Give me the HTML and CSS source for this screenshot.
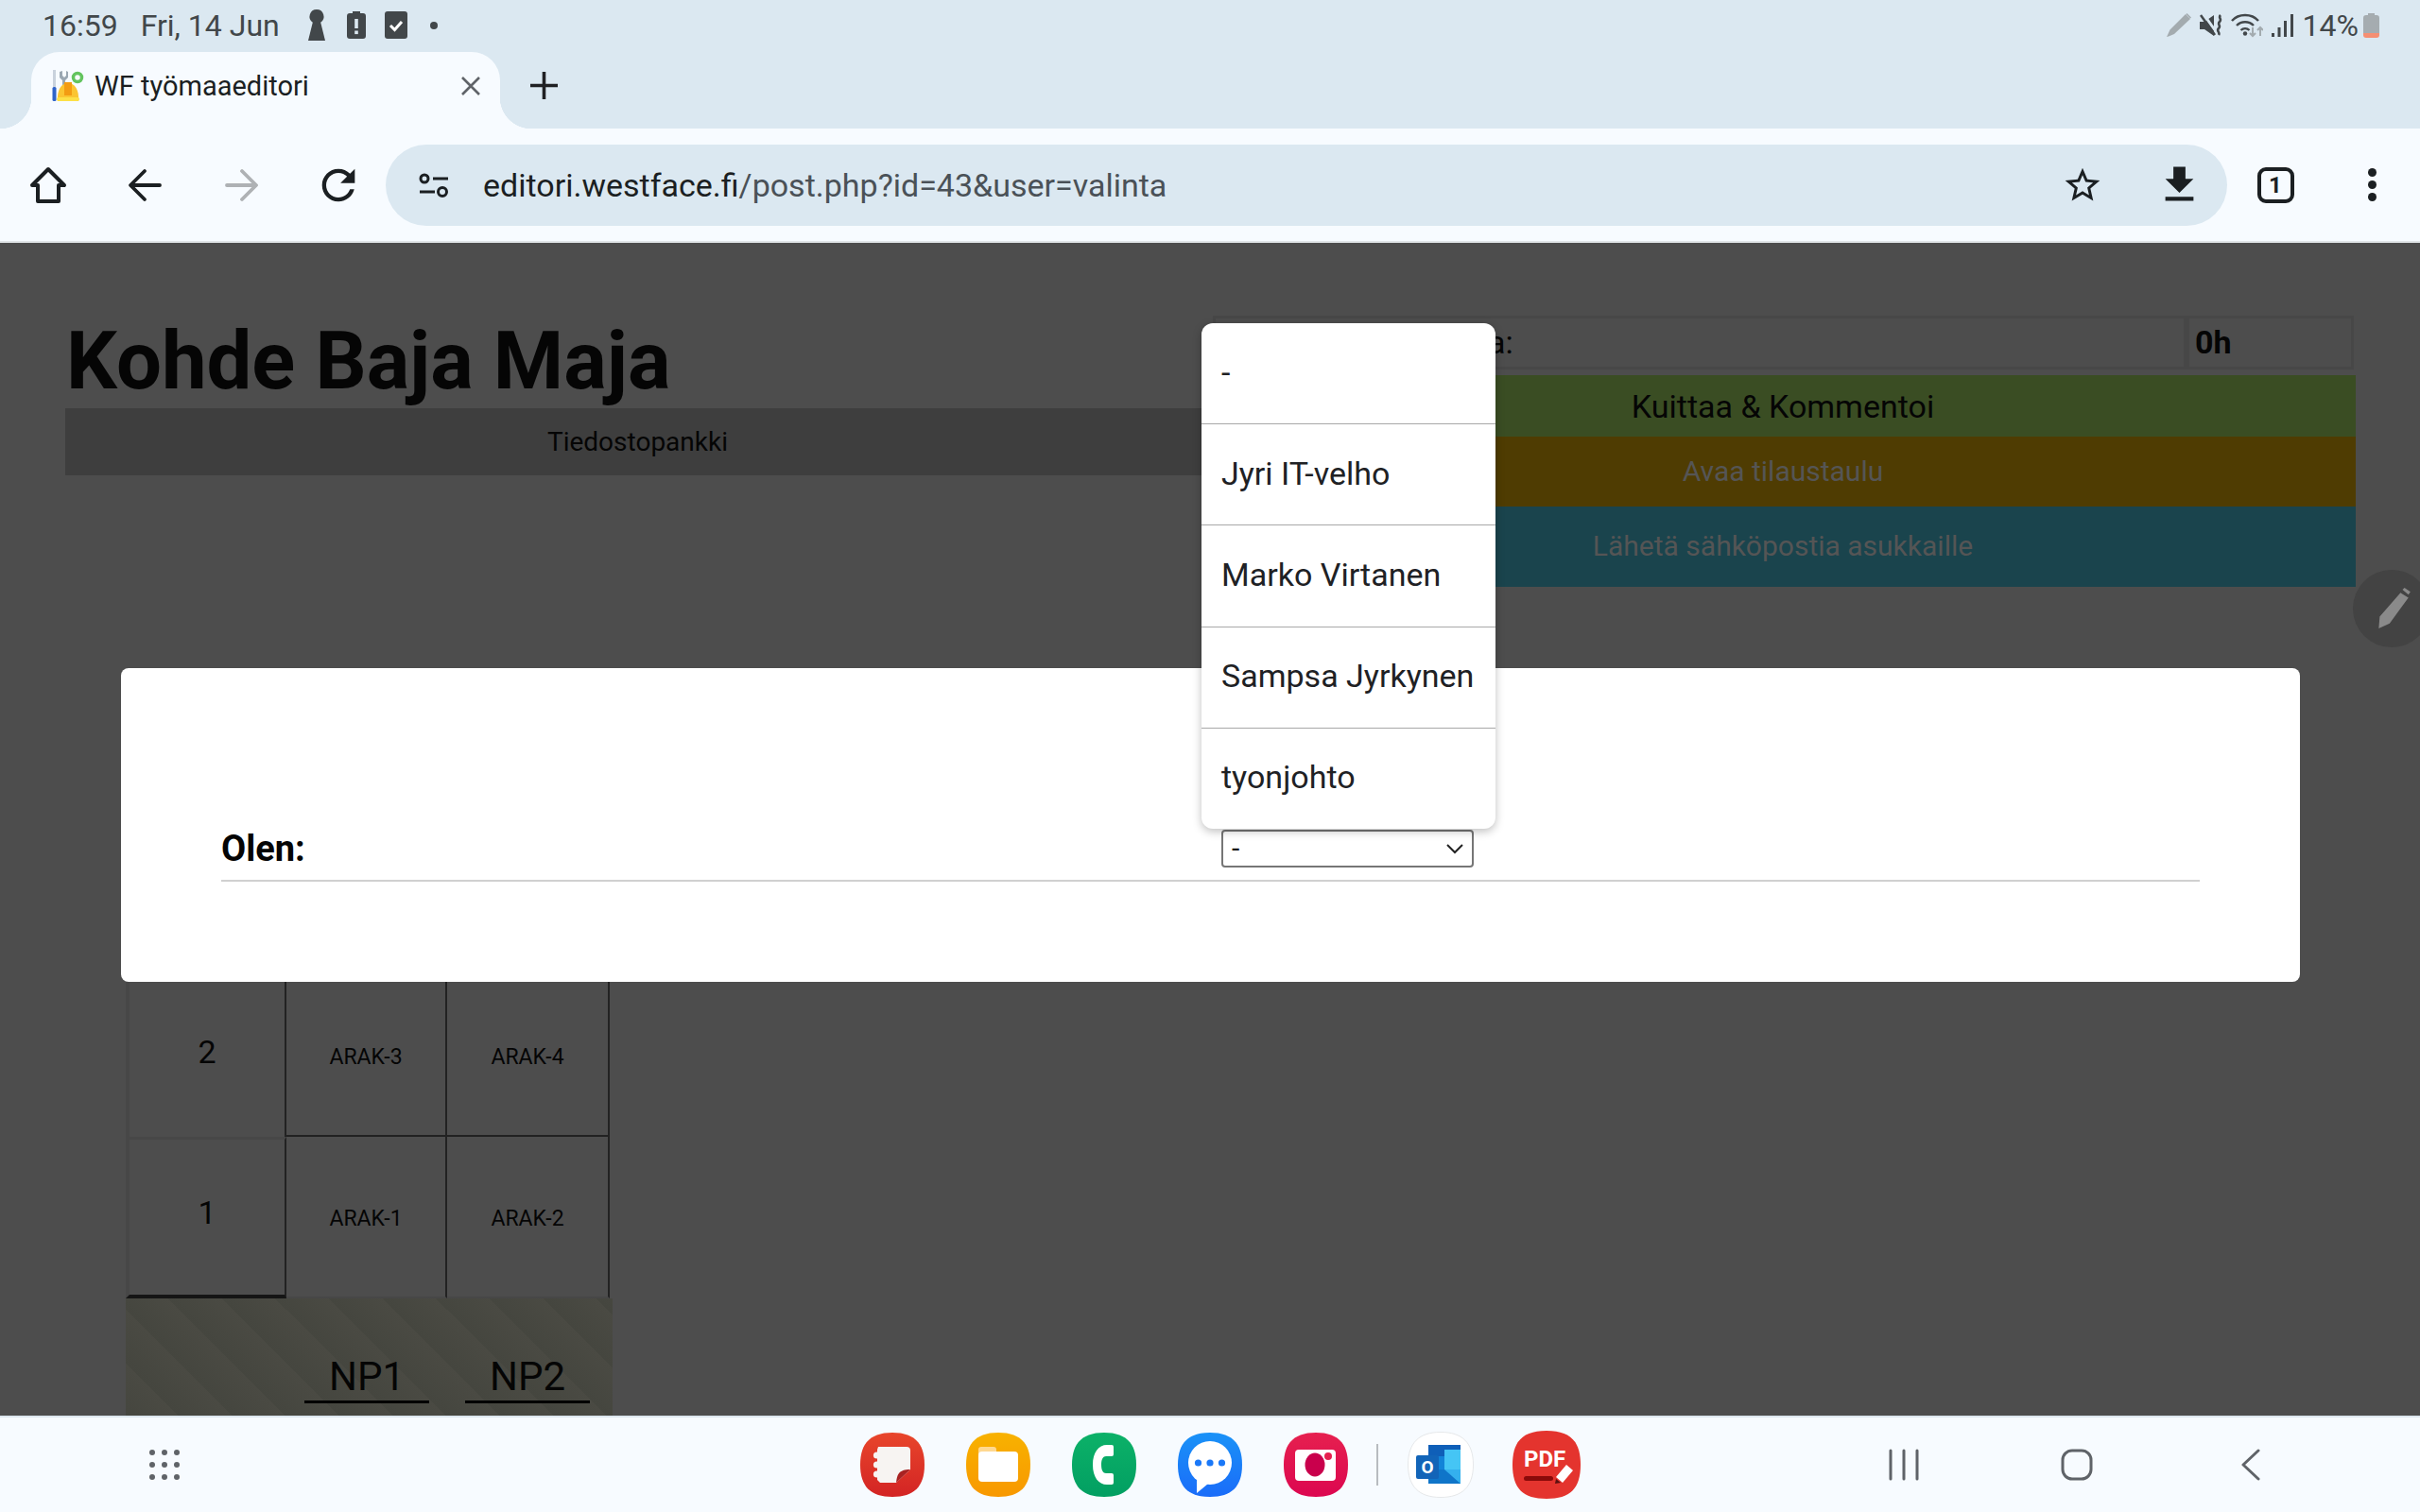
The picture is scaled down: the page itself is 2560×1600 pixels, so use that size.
FILE: index.html
```html
<!DOCTYPE html>
<html>
<head>
    <meta charset="utf-8">
    <title>WF työmaaeditori</title>
    <link rel="stylesheet" href="styles.css">
</head>
<body>

    <header class="chrome">
        <div class="status">
            <span class="clock">16:59</span>
            <span class="date">Fri, 14 Jun</span>
            <svg class="st-key" width="18" height="33" viewBox="0 0 18 33"><path fill="#42474a" d="M9 0a7.5 7.5 0 0 1 4.2 13.7L18 33H0l4.8-19.3A7.5 7.5 0 0 1 9 0z"/></svg>
            <svg class="st-batt" width="20" height="29" viewBox="0 0 20 29"><path fill="#42474a" d="M6 0h8v2h3a3 3 0 0 1 3 3v21a3 3 0 0 1-3 3H3a3 3 0 0 1-3-3V5a3 3 0 0 1 3-3h3z"/><rect x="8.2" y="8" width="3.6" height="10" fill="#dbe8f1"/><rect x="8.2" y="20.500" width="3.600" height="3.600" fill="#dbe8f1"/></svg>
            <svg class="st-check" width="24" height="29" viewBox="0 0 24 29"><rect width="24" height="29" rx="3" fill="#42474a"/><path d="M6 15l4.500 4.500L18 11" fill="none" stroke="#fff" stroke-width="3"/></svg>
            <span class="st-dot"></span>
            <span class="status-right">
                <svg width="26" height="25" viewBox="0 0 26 25"><path fill="#a3abaf" d="M20 1l5 5L8 22l-6 2.500L0 25l1-2 2.500-5.500zM21.500 0l4.500 4.500-1 1L20.500 1z"/></svg>
                <svg width="24" height="24" viewBox="0 0 24 24"><path fill="#42474a" d="M0 8h5l10-7v22L5 16H0z"/><path d="M4 0l15 21" stroke="#dbe8f1" stroke-width="3"/><path d="M1 1l15 21" stroke="#42474a" stroke-width="2.500"/><path d="M22 1c-3 3 2 4-1 7s2 4-1 7 2 4 0 7" fill="none" stroke="#42474a" stroke-width="2.600"/></svg>
                <svg width="34" height="26" viewBox="0 0 34 26"><g fill="none" stroke="#42474a" stroke-width="2.400"><path d="M1 8c7-8 21-8 28 0"/><path d="M6 13c5-5 13-5 18 0"/><path d="M10.500 18c2.500-2.500 6.500-2.500 9 0"/></g><circle cx="15" cy="21.500" r="2.200" fill="#42474a"/><path d="M23 15v9m-3-3l3 3 3-3" fill="none" stroke="#a3abaf" stroke-width="2"/><path d="M31 24v-9m-3 3l3-3 3 3" fill="none" stroke="#a3abaf" stroke-width="2"/></svg>
                <svg width="23" height="24" viewBox="0 0 23 24"><rect y="20" width="3" height="4" fill="#42474a"/><rect x="6.500" y="14" width="3" height="10" fill="#42474a"/><rect x="13" y="7" width="3" height="17" fill="#42474a"/><rect x="20" y="0" width="3" height="24" fill="#42474a"/></svg>
                <span class="battery-text">14%</span>
                <svg class="st-level" width="17" height="26" viewBox="0 0 17 26"><path fill="#a5acb0" d="M5 0h7v2h2a3 3 0 0 1 3 3v16H0V5a3 3 0 0 1 3-3h2z"/><path fill="#f58f73" d="M0 21h17v2a3 3 0 0 1-3 3H3a3 3 0 0 1-3-3z"/></svg>
            </span>
        </div>

        <div class="tabstrip">
            <div class="tab">
                <svg class="favicon" width="34" height="34" viewBox="0 0 34 34">
                    <rect x="1" y="0" width="3" height="18" fill="#c9d2dc"/>
                    <rect x="0.500" y="18" width="4" height="15" rx="1.500" fill="#2f63c8"/>
                    <path d="M11 1v5l2 2 2-2V1l2 1v6l-3 3v7h-3v-7L8 8V2z" fill="#9aa7b2"/>
                    <circle cx="27" cy="8" r="4.500" fill="none" stroke="#63c45e" stroke-width="3.500"/>
                    <path d="M6 33c-1-12 4-19 11-19s12 7 11 19z" fill="#fbc531"/>
                    <rect x="13" y="13" width="8" height="14" fill="#f39c12"/>
                    <rect x="5" y="29" width="24" height="4" rx="2" fill="#fde047"/>
                </svg>
                <span class="tab-title">WF työmaaeditori</span>
                <svg class="tab-close" width="20" height="20" viewBox="0 0 20 20"><path d="M1 1l18 18M19 1L1 19" stroke="#5f6368" stroke-width="2.600"/></svg>
            </div>
            <svg class="new-tab" width="29" height="29" viewBox="0 0 29 29"><path d="M14.500 0v29M0 14.500h29" stroke="#202124" stroke-width="3.600"/></svg>
        </div>

        <div class="toolbar">
            <div class="tool"><svg width="40" height="40" viewBox="0 0 40 40"><path d="M20 3l17 17h-6v17H9V20H3z" fill="none" stroke="#1b1f22" stroke-width="4" stroke-linejoin="round"/></svg></div>
            <div class="tool"><svg width="36" height="36" viewBox="0 0 36 36"><path d="M34 18H4M18 3L3 18l15 15" fill="none" stroke="#1b1f22" stroke-width="3.800" stroke-linecap="round" stroke-linejoin="round"/></svg></div>
            <div class="tool"><svg width="36" height="36" viewBox="0 0 36 36"><path d="M3 18h30M19 3l15 15-15 15" fill="none" stroke="#aeb1b4" stroke-width="3.800" stroke-linecap="round" stroke-linejoin="round"/></svg></div>
            <div class="tool tool-reload"><svg width="52" height="52" viewBox="0 0 24 24"><path fill="#1b1f22" d="M17.650 6.350C16.200 4.900 14.210 4 12 4c-4.420 0-7.990 3.580-7.990 8s3.570 8 7.990 8c3.730 0 6.840-2.550 7.730-6h-2.080c-.82 2.330-3.040 4-5.650 4-3.310 0-6-2.690-6-6s2.690-6 6-6c1.660 0 3.140.69 4.220 1.780L13 11h7V4l-2.350 2.350z"/></svg></div>
            <div class="omnibox">
                <svg class="tune" width="32" height="26" viewBox="0 0 32 26"><g fill="none" stroke="#1b1f22" stroke-width="3"><circle cx="6" cy="6" r="4"/><path d="M15 6h16M1 20h16"/><circle cx="25" cy="20" r="4.500"/></g></svg>
                <span class="url"><b>editori.westface.fi</b>/post.php?id=43&amp;user=valinta</span>
                <div class="tool"><svg width="44" height="44" viewBox="0 0 24 24"><path fill="#1b1f22" d="M22 9.240l-7.190-.62L12 2 9.190 8.630 2 9.240l5.460 4.730L5.820 21 12 17.270 18.180 21l-1.630-7.030L22 9.240zM12 15.400l-3.760 2.270 1-4.280-3.320-2.880 4.380-.38L12 6.100l1.710 4.040 4.380.38-3.320 2.880 1 4.280L12 15.400z"/></svg></div>
                <div class="tool"><svg width="51" height="51" viewBox="0 0 24 24"><path fill="#1b1f22" d="M19 9h-4V3H9v6H5l7 7 7-7zM5 18v2h14v-2H5z"/></svg></div>
            </div>
            <div class="tool"><span class="tab-count">1</span></div>
            <div class="tool"><span class="menu-dots"><i></i><i></i><i></i></span></div>
        </div>
    </header>

    <main class="page">
        <div class="top">
            <div class="head">
                <h1 class="title">Kohde Baja Maja</h1>
                <div class="files">Tiedostopankki</div>
            </div>
            <div class="side">
                <div class="hours">
                    <div class="hours-label">a:</div>
                    <div class="hours-value">0h</div>
                </div>
                <div class="band band-green">Kuittaa &amp; Kommentoi</div>
                <div class="band band-orange">Avaa tilaustaulu</div>
                <div class="band band-teal">Lähetä sähköpostia asukkaille</div>
            </div>
        </div>

        <div class="floors">
            <div class="cell cell-floor">2</div>
            <div class="cell cell-flat">ARAK-3</div>
            <div class="cell cell-flat cell-last">ARAK-4</div>
            <div class="cell cell-floor cell-ground">1</div>
            <div class="cell cell-flat cell-low">ARAK-1</div>
            <div class="cell cell-flat cell-low cell-last">ARAK-2</div>
            <div class="cell cell-base"></div>
            <div class="cell cell-base"><span class="np">NP1</span></div>
            <div class="cell cell-base cell-base-last"><span class="np">NP2</span></div>
        </div>

        <!-- floating edit button -->
        <div class="edit-btn">
            <svg width="38" height="44" viewBox="0 0 36 42"><path fill="#8a8a8a" d="M26 5l8 5-19 26-11 5 1-12zM28 2l2-2 6 4-2 3z"/></svg>
        </div>

        <div class="modal">
            <div class="modal-row">
                <div class="modal-col"><span class="modal-label">Olen:</span></div>
                <div class="modal-col">
                    <div class="select">
                        <span>-</span>
                        <svg width="20" height="12" viewBox="0 0 20 12"><path d="M2 2l8 8 8-8" fill="none" stroke="#222" stroke-width="2"/></svg>
                    </div>
                </div>
            </div>
        </div>

        <ul class="popup">
            <li>-</li>
            <li>Jyri IT-velho</li>
            <li>Marko Virtanen</li>
            <li>Sampsa Jyrkynen</li>
            <li>tyonjohto</li>
        </ul>
    </main>

    <footer class="navbar">
        <svg class="apps" width="34" height="34" viewBox="0 0 34 34"><g fill="#5f6368"><circle cx="4" cy="4" r="3"/><circle cx="17" cy="4" r="3"/><circle cx="30" cy="4" r="3"/><circle cx="4" cy="17" r="3"/><circle cx="17" cy="17" r="3"/><circle cx="30" cy="17" r="3"/><circle cx="4" cy="30" r="3"/><circle cx="17" cy="30" r="3"/><circle cx="30" cy="30" r="3"/></g></svg>

        <div class="dock">
            <svg width="68" height="68" viewBox="0 0 68 68">
                <defs><linearGradient id="gNote" x1="0" y1="0" x2="0" y2="1"><stop offset="0" stop-color="#e8462b"/><stop offset="1" stop-color="#d32424"/></linearGradient></defs>
                <path fill="url(#gNote)" d="M34 0C57 0 68 11 68 34S57 68 34 68 0 57 0 34 11 0 34 0z"/>
                <path fill="#f7f4f2" d="M19 15h30a4 4 0 0 1 4 4v20L38 53H21l-3-3V18z"/>
                <g fill="#f7f4f2"><circle cx="17.500" cy="24" r="3.600"/><circle cx="17.500" cy="34" r="3.600"/><circle cx="17.500" cy="44" r="3.600"/></g>
                <path fill="#a92222" d="M38 53c1-8 2-14 15-14z"/>
            </svg>
            <svg width="68" height="68" viewBox="0 0 68 68">
                <defs><linearGradient id="gFolder" x1="0" y1="0" x2="0" y2="1"><stop offset="0" stop-color="#f8b200"/><stop offset="1" stop-color="#f89800"/></linearGradient></defs>
                <path fill="url(#gFolder)" d="M34 0C57 0 68 11 68 34S57 68 34 68 0 57 0 34 11 0 34 0z"/>
                <path fill="#ffd890" d="M13 18a3 3 0 0 1 3-3h13a3 3 0 0 1 3 3v5H13z"/>
                <rect x="13" y="20" width="42" height="32" rx="4" fill="#fff"/>
            </svg>
            <svg width="68" height="68" viewBox="0 0 68 68">
                <defs><linearGradient id="gPhone" x1="0" y1="0" x2="0" y2="1"><stop offset="0" stop-color="#0cb168"/><stop offset="1" stop-color="#029f62"/></linearGradient></defs>
                <path fill="url(#gPhone)" d="M34 0C57 0 68 11 68 34S57 68 34 68 0 57 0 34 11 0 34 0z"/>
                <path fill="#fff" d="M37 13h5a2 2 0 0 1 2 2v8a2 2 0 0 1-2 2h-6c-3 0-5 3-5 9s2 9 5 9h6a2 2 0 0 1 2 2v8a2 2 0 0 1-2 2h-5C28 55 22 47 22 34s6-21 15-21z"/>
            </svg>
            <svg width="68" height="68" viewBox="0 0 68 68">
                <defs><linearGradient id="gMsg" x1="0" y1="0" x2="0" y2="1"><stop offset="0" stop-color="#1a92f7"/><stop offset="1" stop-color="#1a6cf9"/></linearGradient></defs>
                <path fill="url(#gMsg)" d="M34 0C57 0 68 11 68 34S57 68 34 68 0 57 0 34 11 0 34 0z"/>
                <circle cx="34" cy="32" r="23" fill="#fff"/>
                <path fill="#fff" d="M20 48v16l12-10z"/>
                <g fill="#1a78f8"><circle cx="21.500" cy="32" r="3.600"/><circle cx="34" cy="32" r="3.600"/><circle cx="46.500" cy="32" r="3.600"/></g>
            </svg>
            <svg width="68" height="68" viewBox="0 0 68 68">
                <defs><linearGradient id="gCam" x1="0" y1="0" x2="0" y2="1"><stop offset="0" stop-color="#e6204f"/><stop offset="1" stop-color="#dc0750"/></linearGradient></defs>
                <path fill="url(#gCam)" d="M34 0C57 0 68 11 68 34S57 68 34 68 0 57 0 34 11 0 34 0z"/>
                <rect x="12" y="18" width="43" height="33" rx="4" fill="#fff"/>
                <ellipse cx="33" cy="34" rx="10.500" ry="12.500" fill="#c9004c"/>
                <circle cx="47" cy="25" r="4" fill="#e6204f"/>
            </svg>
            <span class="dock-divider"></span>
            <svg class="dock-outlook" width="70" height="70" viewBox="0 0 70 70">
                <path fill="#fff" stroke="#e6e8ea" d="M35 .5C58 .5 69.500 12 69.500 35S58 69.500 35 69.500.5 58 .5 35 12 .5 35 .5z"/>
                <rect x="22" y="14" width="34" height="14" fill="#0f5fb8"/>
                <rect x="22" y="26" width="17" height="14" fill="#1283d8"/>
                <rect x="39" y="19" width="17" height="21" fill="#45c5f5"/>
                <path fill="#0f75c9" d="M22 40h34v15H22z"/>
                <path fill="#34b0ee" d="M39 40h17v15z"/>
                <rect x="9" y="25" width="24" height="25" rx="2" fill="#1264b8"/>
                <text x="21" y="44" class="outlook-o">O</text>
            </svg>
            <svg class="dock-pdf" width="72" height="72" viewBox="0 0 72 72">
                <path fill="#e4342e" d="M36 0C61 0 72 11 72 36S61 72 36 72 0 61 0 36 11 0 36 0z"/>
                <text x="12" y="38" class="pdf-label">PDF</text>
                <rect x="12" y="48" width="31" height="5" rx="2.500" fill="#8a0a0a"/>
                <path fill="#fff" d="M57 36l7 6-11 13-7-6z"/>
                <path fill="#5a1010" d="M46 51l5 4-6 1z"/>
            </svg>
        </div>

        <div class="nav-keys">
            <svg width="32" height="34" viewBox="0 0 32 34"><path d="M2 2v30M16 2v30M30 2v30" stroke="#5f6368" stroke-width="3" stroke-linecap="round"/></svg>
            <svg class="key-home" width="34" height="34" viewBox="0 0 34 34"><rect x="2" y="2" width="30" height="30" rx="10" fill="none" stroke="#5f6368" stroke-width="3"/></svg>
            <svg class="key-back" width="20" height="34" viewBox="0 0 20 34"><path d="M18 2L2 17l16 15" fill="none" stroke="#5f6368" stroke-width="3" stroke-linecap="round" stroke-linejoin="round"/></svg>
        </div>
    </footer>

</body>
</html>
```

FILE: styles.css
```css
* {
    box-sizing: border-box;
}
body {
    margin: 0;
    width: 2560px;
    height: 1600px;
    display: flex;
    flex-direction: column;
    overflow: hidden;
    font-family: Roboto, "Liberation Sans", sans-serif;
    background-color: #4d4d4d;
    color: #050505;
}
svg {
    display: block;
    flex: none;
}

/* browser chrome */
.chrome {
    background-color: #dbe8f1;
}
.status {
    height: 55px;
    display: flex;
    align-items: center;
    padding: 0 0 2px 45px;
    font-size: 32px;
    color: #42474a;
}
.date {
    margin-left: 24px;
}
.st-key {
    margin-left: 30px;
}
.st-batt {
    margin-left: 23px;
}
.st-check {
    margin-left: 20px;
}
.st-dot {
    width: 8px;
    height: 8px;
    border-radius: 50%;
    background-color: #42474a;
    margin-left: 24px;
}
.status-right {
    margin-left: auto;
    padding-right: 43px;
    display: flex;
    align-items: center;
    gap: 9px;
}
.battery-text {
    margin-left: 1px;
    font-size: 32px;
}
.st-level {
    margin-left: -4px;
}

.tabstrip {
    height: 81px;
    display: flex;
    align-items: center;
    padding-left: 33px;
}
.tab {
    position: relative;
    width: 496px;
    height: 81px;
    background-color: #f7fbff;
    border-radius: 30px 30px 0 0;
    display: flex;
    align-items: center;
    padding: 0 21px 10px 22px;
}
.tab::before,
.tab::after {
    content: "";
    position: absolute;
    bottom: 0;
    width: 33px;
    height: 33px;
}
.tab::before {
    left: -33px;
    background: radial-gradient(circle at 0 0, #dbe8f1 33px, #f7fbff 33.5px);
}
.tab::after {
    right: -33px;
    background: radial-gradient(circle at 100% 0, #dbe8f1 33px, #f7fbff 33.5px);
}
.tab-title {
    margin-left: 11px;
    font-size: 29px;
    color: #1b1f22;
}
.tab-close {
    margin-left: auto;
}
.new-tab {
    margin: 0 0 10px 32px;
}

.toolbar {
    height: 121px;
    background-color: #f7fbff;
    border-bottom: 2px solid #e0e4e7;
    display: flex;
    align-items: center;
}
.tool {
    width: 102px;
    height: 86px;
    flex: none;
    display: flex;
    align-items: center;
    justify-content: center;
}
.tool-reload {
    padding-left: 2px;
}
.omnibox {
    width: 1948px;
    height: 86px;
    border-radius: 43px;
    background-color: #dbe8f1;
    display: flex;
    align-items: center;
    padding-left: 35px;
}
.url {
    margin-left: 36px;
    margin-right: auto;
    font-size: 34px;
    color: #4a5157;
}
.url b {
    font-weight: 400;
    color: #1b1f22;
}
.tab-count {
    width: 39px;
    height: 38px;
    border: 4px solid #1b1f22;
    border-radius: 9px;
    display: flex;
    align-items: center;
    justify-content: center;
    font-size: 24px;
    font-weight: 700;
    color: #1b1f22;
}
.menu-dots {
    display: flex;
    flex-direction: column;
    gap: 4px;
}
.menu-dots i {
    width: 9px;
    height: 9px;
    border-radius: 50%;
    background-color: #1b1f22;
}

/* dimmed page */
.page {
    position: relative;
    flex: 1;
    min-height: 0;
    overflow: hidden;
}
.top {
    height: 364px;
    display: flex;
    padding-left: 69px;
}
.head {
    width: 1211px;
}
.title {
    margin: 0;
    padding: 75px 0 0 1px;
    font-size: 85px;
    line-height: 100px;
    font-weight: 700;
}
.files {
    height: 71px;
    background-color: #3e3e3e;
    display: flex;
    align-items: center;
    justify-content: center;
    font-size: 28px;
}
.side {
    width: 1212px;
    padding-top: 77px;
}
.hours {
    height: 57px;
    width: 1207px;
    margin-left: 3px;
    margin-bottom: 6px;
    display: flex;
    font-size: 34px;
    font-weight: 700;
}
.hours-label,
.hours-value {
    border: 3px solid #474747;
    display: flex;
    align-items: center;
    padding-bottom: 2px;
}
.hours-label {
    flex: 1;
    padding-left: 288px;
    font-weight: 400;
}
.hours-value {
    width: 177px;
    padding-left: 6px;
}
.band {
    display: flex;
    align-items: center;
    justify-content: center;
    font-size: 30px;
    color: #555;
}
.band-green {
    height: 65px;
    background-color: #3a4d23;
    font-size: 34px;
    color: #050505;
}
.band-orange {
    height: 74px;
    background-color: #4f3c02;
    padding-bottom: 2px;
}
.band-teal {
    height: 85px;
    background-color: #1a444d;
    padding-bottom: 2px;
}

.floors {
    margin: 411px 0 0 133px;
    width: 515px;
    display: grid;
    grid-template-columns: 170px 170px 175px;
    grid-template-rows: 171px 171px 125px;
}
.cell {
    display: flex;
    align-items: center;
    justify-content: center;
}
.cell-floor {
    font-size: 34px;
    padding-bottom: 10px;
    border-left: 4px solid #474747;
    border-right: 2px solid #222;
}
.cell-ground {
    border-top: 3px solid #474747;
    border-bottom: 4px solid #151515;
}
.cell-flat {
    font-size: 23px;
    padding-top: 4px;
    border-bottom: 2px solid #222;
    border-right: 2px solid #222;
}
.cell-low {
    border-bottom-color: #474747;
}
.cell-last {
    margin-right: 3px;
}
.cell-base {
    align-items: flex-end;
    background: repeating-linear-gradient(45deg, #45463f 0, #4a4a43 40px);
}
.cell-base-last {
    padding-right: 5px;
}
.np {
    width: 132px;
    margin-bottom: 14px;
    border-bottom: 3px solid #000;
    text-align: center;
    font-size: 42px;
    line-height: 50px;
}

.edit-btn {
    position: absolute;
    left: 2489px;
    top: 346px;
    width: 82px;
    height: 82px;
    border-radius: 50%;
    background-color: #434343;
    display: flex;
    align-items: center;
    padding-left: 23px;
}

/* dialog */
.modal {
    position: absolute;
    left: 128px;
    top: 450px;
    width: 2305px;
    height: 332px;
    background-color: #fff;
    border-radius: 8px;
    padding: 144px 106px 0;
}
.modal-row {
    height: 82px;
    display: flex;
    border-bottom: 2px solid #d0d0d0;
}
.modal-col {
    flex: 1;
    display: flex;
    align-items: center;
    padding-top: 13px;
}
.modal-col + .modal-col {
    padding-left: 23px;
}
.modal-label {
    font-size: 38px;
    font-weight: 700;
}
.select {
    width: 267px;
    height: 40px;
    border: 2px solid #767676;
    border-radius: 4px;
    display: flex;
    align-items: center;
    justify-content: space-between;
    padding: 0 8px 0 9px;
    font-size: 30px;
    color: #111;
}

.popup {
    position: absolute;
    left: 1271px;
    top: 85px;
    width: 311px;
    height: 535px;
    margin: 0;
    padding: 0;
    list-style: none;
    background-color: #fff;
    border-radius: 12px;
    box-shadow: 0 3px 10px rgba(0, 0, 0, 0.25);
    display: flex;
    flex-direction: column;
    font-size: 34px;
    color: #202124;
}
.popup li {
    flex: 1;
    display: flex;
    align-items: center;
    padding: 0 0 3px 21px;
    border-top: 1px solid #a8a8a8;
}
.popup li:first-child {
    border-top: none;
}

/* android nav */
.navbar {
    height: 102px;
    flex: none;
    background-color: #f7fbff;
    border-top: 2px solid #dde7ef;
    display: flex;
    align-items: center;
    padding-left: 157px;
}
.dock {
    margin-left: 719px;
    display: flex;
    align-items: center;
    gap: 44px;
}
.dock-divider {
    width: 2px;
    height: 44px;
    background-color: #b8bcc0;
    margin: 0 -13px 0 -14px;
}
.dock-pdf {
    margin-left: -3px;
}
.outlook-o {
    font-size: 19px;
    font-weight: 700;
    fill: #fff;
    text-anchor: middle;
}
.pdf-label {
    font-size: 24px;
    font-weight: 700;
    fill: #fff;
}
.nav-keys {
    margin-left: 326px;
    display: flex;
    align-items: center;
}
.key-home {
    margin-left: 150px;
}
.key-back {
    margin-left: 157px;
}
```
